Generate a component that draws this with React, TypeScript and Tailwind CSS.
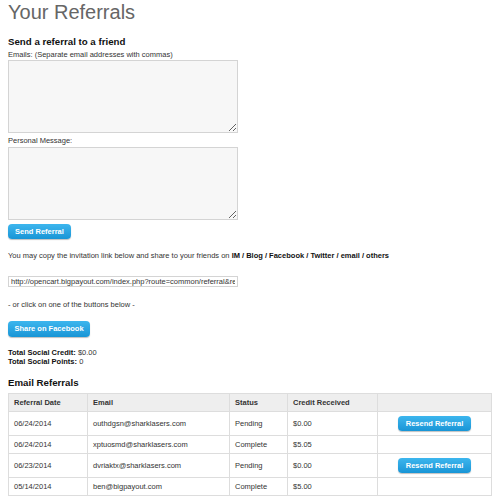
const referrals = [
  { date: "06/24/2014", email: "outhdgsn@sharklasers.com", status: "Pending", credit: "$0.00", resend: true },
  { date: "06/24/2014", email: "xptuosmd@sharklasers.com", status: "Complete", credit: "$5.05", resend: false },
  { date: "06/23/2014", email: "dvriaktx@sharklasers.com", status: "Pending", credit: "$0.00", resend: true },
  { date: "05/14/2014", email: "ben@bigpayout.com", status: "Complete", credit: "$5.00", resend: false },
];

function BlueButton({ label, className }: { label: string; className: string }) {
  return (
    <button
      className={`rounded-[4px] bg-gradient-to-b from-[#3cb6ee] to-[#1795d6] text-[7.5px] font-bold leading-none text-white shadow-[0_1px_1px_rgba(0,0,0,0.25)] ${className}`}
    >
      {label}
    </button>
  );
}

export default function App() {
  return (
    <div className="h-[500px] w-[500px] overflow-hidden bg-white px-[8px] pt-[2px] font-['Liberation_Sans',Arial,sans-serif] text-[7.5px] leading-[9px] text-[#333]">
      <h1 className="text-[20px] leading-[20px] text-[#666]">Your Referrals</h1>

      <h2 className="mt-[14px] text-[9.7px] font-bold leading-[12px] text-[#111]">Send a referral to a friend</h2>
      <div className="mt-[2px]">Emails: (Separate email addresses with commas)</div>
      <textarea className="mt-[1px] block h-[73px] w-[230px] border border-[#d4d4d4] bg-[#f7f7f7]" />

      <div className="mt-[3px]">Personal Message:</div>
      <textarea className="mt-[2px] block h-[73px] w-[230px] border border-[#d4d4d4] bg-[#f7f7f7]" />

      <BlueButton label="Send Referral" className="mt-[4px] block h-[15px] w-[63px]" />

      <p className="mt-[12px]">
        You may copy the invitation link below and share to your friends on{" "}
        <b className="text-[#111]">IM / Blog / Facebook / Twitter / email / others</b>
      </p>

      <input
        readOnly
        value="http://opencart.bigpayout.com/index.php?route=common/referral&ref=bigpayout"
        className="mt-[16px] block h-[11px] w-[230px] border border-[#d4d4d4] bg-white px-[2px] text-[7.5px] leading-[9px] text-[#333] outline-none"
      />

      <p className="mt-[13px]">- or click on one of the buttons below -</p>

      <BlueButton label="Share on Facebook" className="mt-[12px] block h-[16px] w-[82px]" />

      <div className="mt-[11px]">
        <b className="text-[#111]">Total Social Credit:</b> $0.00
      </div>
      <div>
        <b className="text-[#111]">Total Social Points:</b> 0
      </div>

      <h2 className="mt-[11px] text-[9.7px] font-bold leading-[12px] text-[#111]">Email Referrals</h2>

      <table className="mt-[4px] w-[483px] table-fixed border-collapse border border-[#ddd]">
        <colgroup>
          <col className="w-[79px]" />
          <col className="w-[142px]" />
          <col className="w-[58px]" />
          <col className="w-[90px]" />
          <col className="w-[114px]" />
        </colgroup>
        <thead>
          <tr className="h-[18px] bg-[#eee] text-left">
            <th className="border border-[#ddd] px-[5px] font-bold text-[#333]">Referral Date</th>
            <th className="border border-[#ddd] px-[5px] font-bold text-[#333]">Email</th>
            <th className="border border-[#ddd] px-[5px] font-bold text-[#333]">Status</th>
            <th className="border border-[#ddd] px-[5px] font-bold text-[#333]">Credit Received</th>
            <th className="border border-[#ddd] px-[5px]"></th>
          </tr>
        </thead>
        <tbody>
          {referrals.map((r, i) => (
            <tr key={i} className={r.resend ? "h-[24px]" : "h-[18px]"}>
              <td className="border border-[#ddd] px-[5px]">{r.date}</td>
              <td className="border border-[#ddd] px-[5px]">{r.email}</td>
              <td className="border border-[#ddd] px-[5px]">{r.status}</td>
              <td className="border border-[#ddd] px-[5px]">{r.credit}</td>
              <td className="border border-[#ddd] px-[5px] text-center">
                {r.resend && <BlueButton label="Resend Referral" className="inline-block h-[15px] w-[73px] align-middle" />}
              </td>
            </tr>
          ))}
        </tbody>
      </table>
    </div>
  );
}
